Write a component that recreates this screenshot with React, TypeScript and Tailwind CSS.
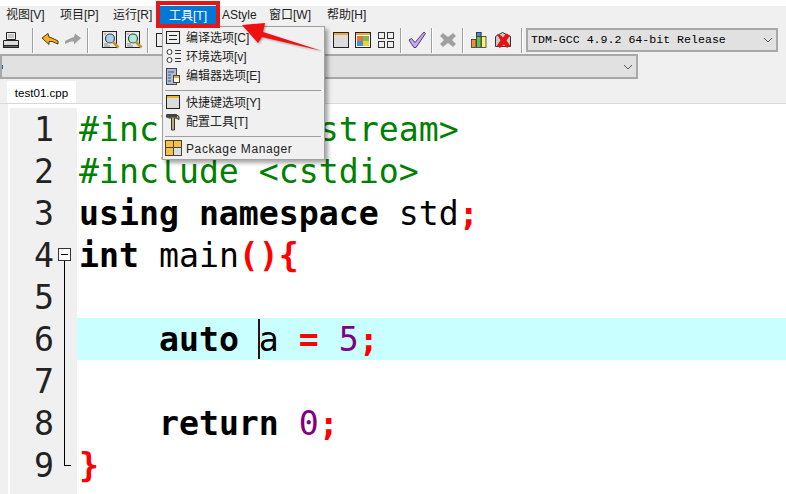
import React from 'react';

const Sep = ({ className }: { className: string }) => (
  <div className={`h-[25px] w-[2px] shrink-0 border-l border-r border-l-[#a0a0a0] border-r-white ${className}`} />
);

const Doc = ({ tint, className }: { tint: string; className: string }) => (
  <svg className={className} width="18" height="18" viewBox="0 0 18 18">
    <rect x="0.5" y="0.5" width="14" height="16" fill="#e8e8e8" stroke="#222" />
    <path d="M2 3h2M2 13h4M2 15h6" stroke="#888" />
    <circle cx="8" cy="7.5" r="4.5" fill={tint} stroke="#444" strokeWidth="1.2" />
    <path d="M11 11l5.5 5.5" stroke="#d09020" strokeWidth="2.6" />
  </svg>
);

const Chevron = () => (
  <svg width="10" height="6" viewBox="0 0 10 6">
    <path d="M1 1l4 4 4-4" fill="none" stroke="#555" />
  </svg>
);

const Kw = ({ children }: { children: React.ReactNode }) => <b className="font-bold text-black">{children}</b>;
const Red = ({ children }: { children: React.ReactNode }) => <b className="font-bold text-[#ff0000]">{children}</b>;

const lines: React.ReactNode[] = [
  <span className="text-[#008000]">#include &lt;iostream&gt;</span>,
  <span className="text-[#008000]">#include &lt;cstdio&gt;</span>,
  <><Kw>using namespace</Kw> std<Red>;</Red></>,
  <><Kw>int</Kw> main<Red>(){'{'}</Red></>,
  <></>,
  <>    <Kw>auto</Kw> a <Red>=</Red> <span className="text-[#800080]">5</span><Red>;</Red></>,
  <></>,
  <>    <Kw>return</Kw> <span className="text-[#800080]">0</span><Red>;</Red></>,
  <Red>{'}'}</Red>,
];

const toolItems: [string, number][] = [
  ['编译选项[C]', 1],
  ['环境选项[v]', 20],
  ['编辑器选项[E]', 39],
  ['快捷键选项[Y]', 66],
  ['配置工具[T]', 85],
];

export default function App() {
  return (
    <div className="relative flex h-[494px] w-[786px] flex-col overflow-hidden bg-white font-['Liberation_Sans','Noto_Sans_CJK_SC',sans-serif] text-[12px] text-[#222]">
      <div className="h-[6px] shrink-0 bg-white" />
      {/* menu bar */}
      <div className="flex h-[20px] shrink-0 items-start bg-[#f0f0f0] pl-[6px] leading-[18px]">
        <span className="w-[54px]">视图[V]</span>
        <span className="w-[53px]">项目[P]</span>
        <span className="w-[47px]">运行[R]</span>
        <span className="flex h-[19px] w-[56px] items-center justify-center bg-[#0078d7] text-white">工具[T]</span>
        <span className="ml-[6px] w-[47px]">AStyle</span>
        <span className="w-[58px]">窗口[W]</span>
        <span>帮助[H]</span>
      </div>
      {/* toolbar */}
      <div className="flex h-[28px] shrink-0 items-center bg-[#f0f0f0] pl-[2px]">
        <svg width="18" height="18" viewBox="0 0 18 18">
          <path d="M4.5 1.5h9v7h-9z" fill="#eee" stroke="#222" />
          <path d="M6 4h6M6 6h6" stroke="#999" />
          <path d="M1.5 9.5h15v5h-15z" fill="#ddd" stroke="#222" />
          <rect x="1.5" y="14.5" width="15" height="2" fill="#666" stroke="#222" />
        </svg>
        <Sep className="ml-[12px]" />
        <svg className="ml-[7px]" width="18" height="18" viewBox="0 0 18 18">
          <path d="M1 7l6-4.500 1 3.500 3 1 6 3v3l-6-2.500-3 0 0 3z" fill="#f4b028" stroke="#3a2a00" strokeWidth="0.9" />
        </svg>
        <svg className="ml-[5px]" width="18" height="18" viewBox="0 0 18 18">
          <path d="M17 7l-6-4.500-1 3.500-3 1-6 3v3l6-2.500 3 0 0 3z" fill="#a0a0a0" />
        </svg>
        <Sep className="ml-[5px]" />
        <Doc className="ml-[13px]" tint="#a8d0f0" />
        <Doc className="ml-[5px]" tint="#a8f0d0" />
        <Sep className="ml-[4px]" />
        <svg className="ml-[6px]" width="18" height="18" viewBox="0 0 18 18">
          <rect x="1.500" y="2.500" width="14" height="13" fill="#eee" stroke="#222" />
        </svg>
        <svg className="ml-[159px]" width="18" height="18" viewBox="0 0 18 18">
          <rect x="1.500" y="1.500" width="15" height="15" fill="#dcdcdc" stroke="#222" />
          <rect x="2" y="2" width="14" height="2" fill="#f0a830" />
        </svg>
        <svg className="ml-[4px]" width="18" height="18" viewBox="0 0 18 18">
          <rect x="1.500" y="1.500" width="15" height="15" fill="#fff" stroke="#222" />
          <rect x="2" y="2" width="14" height="2" fill="#f0a830" />
          <rect x="3" y="5" width="6" height="5" fill="#f07030" />
          <rect x="9" y="5" width="6" height="5" fill="#70c050" />
          <rect x="3" y="10" width="6" height="5" fill="#4090e0" />
          <rect x="9" y="10" width="6" height="5" fill="#f0d030" />
        </svg>
        <svg className="ml-[5px]" width="18" height="18" viewBox="0 0 18 18">
          <rect x="1.500" y="1.500" width="6" height="6" fill="#eee" stroke="#333" />
          <rect x="10.500" y="1.500" width="6" height="6" fill="#eee" stroke="#333" />
          <rect x="1.500" y="10.500" width="6" height="6" fill="#eee" stroke="#333" />
          <rect x="10.500" y="10.500" width="6" height="6" fill="#eee" stroke="#333" />
        </svg>
        <Sep className="ml-[5px]" />
        <svg className="ml-[6px]" width="18" height="18" viewBox="0 0 18 18">
          <path d="M1 9l2.500-1.500 3.500 4L16 1l1.500 1.500L8 16.500h-2z" fill="#c8a8f4" stroke="#3a2a60" strokeWidth="0.9" />
        </svg>
        <Sep className="ml-[5px]" />
        <svg className="ml-[6px]" width="18" height="18" viewBox="0 0 18 18">
          <path d="M4 2l5 4 5-4 3 3-4 4 4 4-3 3-5-4-5 4-3-3 4-4-4-4z" fill="#a0a0a0" />
        </svg>
        <Sep className="ml-[5px]" />
        <svg className="ml-[6px]" width="18" height="18" viewBox="0 0 18 18">
          <rect x="1.500" y="8.500" width="4.500" height="8" fill="#f09030" stroke="#333" strokeWidth="0.8" />
          <rect x="6.500" y="1.500" width="4.500" height="15" fill="#60c050" stroke="#333" strokeWidth="0.8" />
          <rect x="6.500" y="1.500" width="4.500" height="4" fill="#4090e0" stroke="#333" strokeWidth="0.8" />
          <rect x="11.500" y="5.500" width="4.500" height="11" fill="#f8f070" stroke="#333" strokeWidth="0.8" />
        </svg>
        <svg className="ml-[6px]" width="18" height="18" viewBox="0 0 18 18">
          <path d="M1.500 5.500l7-4 8 4v10h-15z" fill="#ccc" stroke="#333" />
          <path d="M3 3l4 1.500 2 2 3-4 4 2-3.500 5 3.500 5-3 2.500-3-3.500-4 3.500-3-2.500 3.500-5z" fill="#e81010" />
        </svg>
        <Sep className="ml-[9px]" />
        <div className="ml-[3px] flex h-[24px] w-[252px] items-center justify-between border-2 border-[#a8a8a8] bg-[#e1e1e1] pl-[3px] pr-[3px] font-['Liberation_Mono',monospace] text-[11.6px] text-black">
          TDM-GCC 4.9.2 64-bit Release
          <Chevron />
        </div>
      </div>
      {/* class browser row */}
      <div className="h-[25px] shrink-0 bg-[#f0f0f0]">
        <div className="flex h-[25px] w-[638px] items-center justify-between border-2 border-[#a8a8a8] bg-[#e1e1e1] pr-[3px]">
          <div className="h-[4px] w-[1px] bg-[#2060c0]" />
          <Chevron />
        </div>
      </div>
      {/* tabs */}
      <div className="flex h-[25px] shrink-0 items-end border-b border-[#d8d8d8] bg-[#f0f0f0] pl-[7px]">
        <div className="flex h-[22px] w-[69px] items-center justify-center bg-white pt-[1px] text-[11.6px] text-black">
          test01.cpp
        </div>
      </div>
      {/* editor */}
      <div className="relative flex min-h-0 flex-1 font-['DejaVu_Sans_Mono',monospace] text-[33.2px] leading-[44px] text-black">
        <div className="w-[8px] shrink-0 bg-[#f0f0f0]" />
        <div className="w-[2px] shrink-0 bg-white" />
        <div className="flex flex-1 flex-col pt-[4px]">
          {lines.map((line, i) => (
            <div key={i} className="flex h-[42px] shrink-0">
              <div className="w-[67px] shrink-0 bg-[#f0f0f0] pr-[23px] text-right text-[#222]">{i + 1}</div>
              <div className={`flex-1 whitespace-pre pl-[2px] ${i === 5 ? 'bg-[#caffff]' : ''}`}>{line}</div>
            </div>
          ))}
          <div className="w-[67px] flex-1 bg-[#f0f0f0]" />
        </div>
        {/* caret */}
        <div className="absolute left-[258px] top-[215px] h-[40px] w-[2px] bg-[#301010]" />
        {/* fold marker */}
        <div className="absolute left-[58px] top-[144px] flex h-[13px] w-[13px] items-center justify-center border border-[#333] bg-white">
          <div className="h-px w-[7px] bg-black" />
        </div>
        <div className="absolute left-[64px] top-[157px] h-[205px] w-[7px] border-b border-l border-black" />
      </div>
      {/* dropdown menu */}
      <div className="absolute left-[162px] top-[26px] h-[134px] w-[163px] border border-[#a0a0a0] bg-[#f0f0f0] shadow-[3px_3px_4px_rgba(0,0,0,0.35)]">
        {toolItems.map(([label, top]) => (
          <div key={label} className="absolute left-[23px] leading-[20px] text-[#222]" style={{ top }}>{label}</div>
        ))}
        <div className="absolute left-[23px] top-[112px] leading-[20px] tracking-[0.6px] text-[#222]">Package Manager</div>
        <div className="absolute left-[2px] right-[3px] top-[63px] h-px bg-[#a0a0a0]" />
        <div className="absolute left-[2px] right-[3px] top-[109px] h-px bg-[#a0a0a0]" />
        <svg className="absolute left-[2px] top-0" width="18" height="130" viewBox="0 0 18 130">
          <rect x="1.500" y="4.500" width="13" height="12" fill="#eee" stroke="#222" />
          <path d="M4 8.500h8M4 12.500h8" stroke="#222" />
          <circle cx="4.500" cy="25" r="2.500" fill="#fff" stroke="#333" />
          <circle cx="4.500" cy="33" r="2.500" fill="#fff" stroke="#333" />
          <path d="M10 23.500h6M10 26.500h6M10 31.500h6M10 34.500h6" stroke="#333" />
          <rect x="1.500" y="41.500" width="10" height="16" fill="#a8bcd8" stroke="#445" />
          <path d="M3 45h6M3 48h3M3 51h3M3 54h3" stroke="#556" />
          <rect x="8.500" y="48.500" width="6" height="7" fill="#fff" stroke="#604010" />
          <rect x="9" y="49" width="5" height="2" fill="#f0a830" />
          <rect x="1.500" y="68.500" width="13" height="13" fill="#dcdcdc" stroke="#222" />
          <rect x="2" y="69" width="12" height="2" fill="#f0b030" />
          <path d="M2 87.500h9l3 2v3l-3-1.500H9.500v12h-3v-12H4l-2-1z" fill="#b8b070" stroke="#222" strokeWidth="0.9" />
          <rect x="1" y="87.500" width="11" height="3" fill="#444" />
          <rect x="0.500" y="113.500" width="16" height="15" fill="#f0c050" stroke="#5a4010" />
          <path d="M0.500 120.500h16M8.500 113.500v15" stroke="#5a4010" />
          <rect x="8.500" y="120.500" width="8" height="8" fill="#ddd" stroke="#444" />
        </svg>
      </div>
      {/* annotation: red box and arrow */}
      <div className="absolute left-[156px] top-[1px] h-[27px] w-[64px] border-4 border-[#e01818]" />
      <svg className="absolute left-[238px] top-[18px] drop-shadow-[1px_1px_1px_rgba(0,0,0,0.35)]" width="90" height="36" viewBox="0 0 90 36">
        <path d="M4 7L27 5l-2 9 59 19-60-14-4 6z" fill="#f01010" />
      </svg>
    </div>
  );
}
